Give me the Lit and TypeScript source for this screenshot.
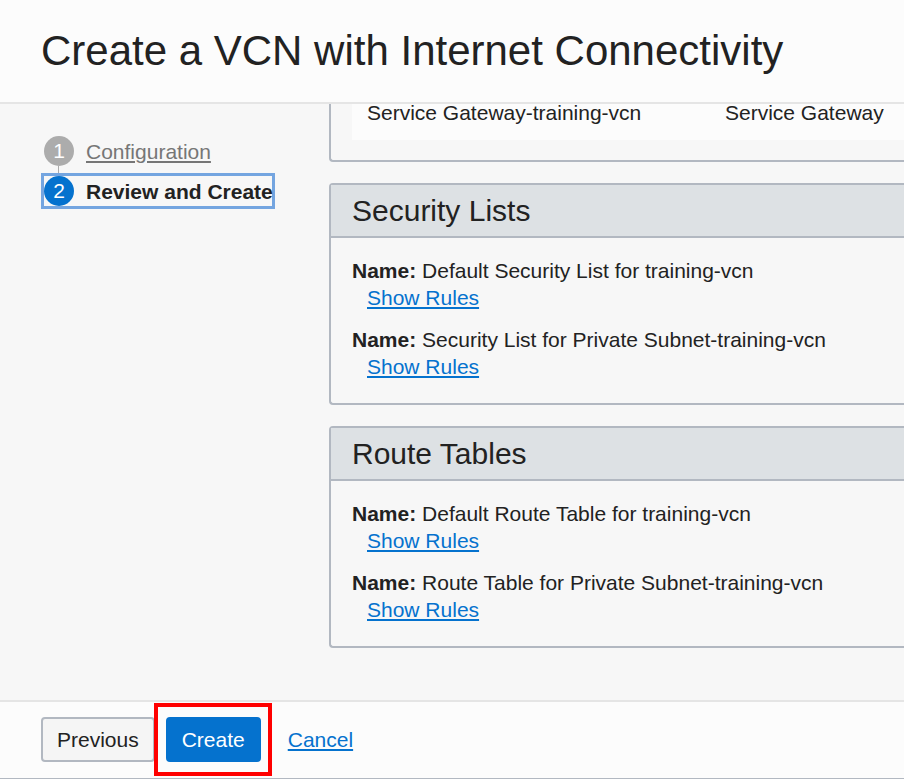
import { LitElement, html, css } from "lit";
import { customElement } from "lit/decorators.js";

interface Panel { title: string; names: string[]; }

const panels: Panel[] = [
  { title: "Security Lists", names: ["Default Security List for training-vcn", "Security List for Private Subnet-training-vcn"] },
  { title: "Route Tables", names: ["Default Route Table for training-vcn", "Route Table for Private Subnet-training-vcn"] },
];

@customElement("app-root")
export class AppRoot extends LitElement {
  static styles = css`
    * { box-sizing: border-box; }
    :host { display: flex; flex-direction: column; height: 100vh; overflow: hidden; background: #f7f7f7; color: #222; font: 21px/24px "Liberation Sans", Arial, sans-serif; }
    header { flex: none; padding: 26px 41px; background: #fcfcfc; border-bottom: 2px solid #e5e5e5; }
    h1 { margin: 0; font-size: 42px; line-height: 50px; font-weight: 400; white-space: nowrap; }
    .body { flex: 1; min-height: 0; display: flex; }
    nav { flex: none; width: 329px; padding: 29px 0 0 41px; }
    ol { list-style: none; margin: 0; padding: 0; }
    .step { display: flex; align-items: center; width: 234px; height: 36px; padding-left: 3px; position: relative; white-space: nowrap; }
    .step + .step { margin-top: 4px; }
    .step.current { border: 3px solid #74a5e0; padding-left: 0; font-weight: 700; }
    .step:first-child::after { content: ""; position: absolute; left: 17px; top: 33px; width: 1px; height: 8px; background: #aaa; }
    .num { width: 30px; height: 30px; margin-right: 12px; border-radius: 50%; background: #acacac; color: #fff; text-align: center; line-height: 30px; font-weight: 400; flex: none; }
    .current .num { background: #0572ce; }
    .label { padding-top: 2px; }
    .step a { color: #767676; }
    a { color: #0572ce; text-decoration-thickness: 2px; text-underline-offset: 2px; }
    main { flex: 1; min-width: 0; display: flex; flex-direction: column; gap: 21px; }
    section { flex: none; border: 2px solid #b2b8c1; border-right: 0; border-radius: 4px 0 0 4px; }
    .gateways { border-top: 0; border-top-left-radius: 0; padding: 0 0 20px 21px; }
    table { width: 100%; table-layout: fixed; border-collapse: collapse; background: #fcfcfc; }
    td { padding: 0 0 18px 15px; line-height: 18px; vertical-align: top; white-space: nowrap; }
    td:first-child { width: 358px; }
    h2 { margin: 0; padding: 0 21px; font-size: 30px; line-height: 51px; font-weight: 400; background: #dde1e4; border-bottom: 2px solid #b2b8c1; }
    .items { display: flex; flex-direction: column; gap: 15px; padding: 19px 21px 23px; }
    .item { line-height: 27px; }
    .item p { margin: 0; }
    .item a { margin-left: 15px; }
    footer { flex: none; height: 79px; padding: 0 41px 1px; display: flex; align-items: center; background: #fcfcfc; border-top: 2px solid #e5e5e5; border-bottom: 1px solid #b2b8c1; }
    button { height: 45px; padding: 0 14px; font: inherit; color: #222; background: #f5f5f5; border: 2px solid #b2b8c1; border-radius: 4px; }
    .highlight { margin: 0 16px 0 -1px; padding: 10px 7px 10px 8px; border: 4px solid #f00; }
    .primary { display: block; color: #fff; background: #0572ce; border-color: #0572ce; }
  `;

  render() {
    return html`
      <header><h1>Create a VCN with Internet Connectivity</h1></header>
      <div class="body">
        <nav aria-label="Steps"><ol>
          <li class="step"><span class="num">1</span><a class="label" href="#configuration">Configuration</a></li>
          <li class="step current" aria-current="step"><span class="num">2</span><span class="label">Review and Create</span></li>
        </ol></nav>
        <main>
          <section class="gateways"><table><tbody><tr><td>Service Gateway-training-vcn</td><td>Service Gateway</td></tr></tbody></table></section>
          ${panels.map((p) => html`<section><h2>${p.title}</h2><div class="items">
            ${p.names.map((n) => html`<div class="item"><p><b>Name:</b> ${n}</p><a href="#rules">Show Rules</a></div>`)}
          </div></section>`)}
        </main>
      </div>
      <footer>
        <button type="button">Previous</button>
        <div class="highlight"><button type="button" class="primary">Create</button></div>
        <a href="#cancel">Cancel</a>
      </footer>`;
  }
}
